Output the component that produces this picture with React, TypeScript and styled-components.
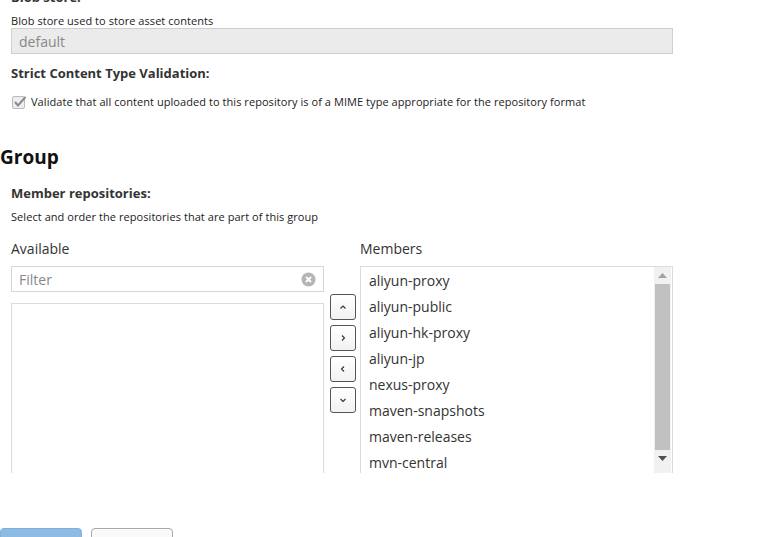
import React from "react";
import styled, { createGlobalStyle } from "styled-components";

const Global = createGlobalStyle`
  html, body { margin: 0; padding: 0; background: #fff; overflow: hidden; }
  body { font-family: "Open Sans", "Liberation Sans", sans-serif; color: #333; }
`;

const Page = styled.div`
  width: 766px;
  height: 537px;
  overflow: hidden;
  position: relative;
`;

const Inner = styled.div`
  margin-top: -11px;
  display: flex;
  flex-direction: column;
`;

const Section = styled.div`
  padding-left: 11px;
  display: flex;
  flex-direction: column;
`;

const FieldLabel = styled.div`
  font-size: 13px;
  font-weight: 700;
  color: #333;
  line-height: 16px;
`;

const HelpText = styled.div`
  font-size: 11px;
  color: #222;
  line-height: 14px;
  letter-spacing: 0.06px;
  margin-top: ${(p: { $mt?: number }) => p.$mt ?? 0}px;
`;

const TextInput = styled.div<{ $disabled?: boolean; $w: number }>`
  box-sizing: border-box;
  width: ${(p) => p.$w}px;
  height: 26px;
  border: 1px solid ${(p) => (p.$disabled ? "#cfcfcf" : "#d6d6d6")};
  background: ${(p) => (p.$disabled ? "#ebebeb" : "#fff")};
  color: #888;
  font-size: 14px;
  padding: 0 7px;
  display: flex;
  align-items: center;
  justify-content: space-between;
`;

const CheckRow = styled.div`
  display: flex;
  align-items: center;
  gap: 6px;
  margin-top: 14px;
  padding-left: 1px;
`;

const CheckBox = styled.div`
  width: 13px;
  height: 13px;
  box-sizing: border-box;
  border: 1px solid #bbb;
  background: #eee;
  border-radius: 2px;
  position: relative;
`;

const Heading = styled.div`
  font-size: 19px;
  font-weight: 700;
  color: #111;
  margin-top: 36px;
  line-height: 24px;
`;

const Columns = styled.div`
  display: flex;
  align-items: flex-start;
  margin-top: 16px;
`;

const Column = styled.div`
  display: flex;
  flex-direction: column;
`;

const ColTitle = styled.div`
  font-size: 14px;
  color: #333;
  line-height: 18px;
  height: 26px;
`;

const ListBox = styled.div<{ $w: number; $h: number; $mt?: number }>`
  box-sizing: border-box;
  width: ${(p) => p.$w}px;
  height: ${(p) => p.$h}px;
  margin-top: ${(p) => p.$mt ?? 0}px;
  border: 1px solid #dcdcdc;
  border-bottom: none;
  background: #fff;
  display: flex;
`;

const Items = styled.div`
  flex: 1;
  display: flex;
  flex-direction: column;
  padding-top: 1px;
`;

const Item = styled.div`
  height: 26px;
  line-height: 26px;
  padding-left: 8px;
  font-size: 14px;
  color: #333;
`;

const ScrollBar = styled.div`
  width: 17px;
  background: #f1f1f1;
  display: flex;
  flex-direction: column;
  align-items: center;
  margin-right: 1px;
`;

const ScrollArrow = styled.div`
  height: 17px;
  width: 17px;
  display: flex;
  align-items: center;
  justify-content: center;
`;

const ScrollThumb = styled.div`
  width: 15px;
  height: 166px;
  background: #c1c1c1;
`;

const Buttons = styled.div`
  display: flex;
  flex-direction: column;
  gap: 5px;
  margin: 54px 4px 0 6px;
`;

const OrderButton = styled.div`
  box-sizing: border-box;
  width: 26px;
  height: 26px;
  border: 1px solid #555;
  border-radius: 3px;
  background: linear-gradient(#fff, #f2f2f2);
  display: flex;
  align-items: center;
  justify-content: center;
`;

const Footer = styled.div`
  display: flex;
  gap: 9px;
  margin-top: 55px;
`;

const FootButton = styled.div<{ $primary?: boolean }>`
  box-sizing: border-box;
  width: 82px;
  height: 30px;
  border-radius: 4px;
  border: 1px solid ${(p) => (p.$primary ? "#7fb0dc" : "#a8a8a8")};
  background: ${(p) => (p.$primary ? "#8ebbe3" : "#fafafa")};
`;

const Chevron = ({ d }: { d: string }) => (
  <svg width="10" height="10" viewBox="0 0 10 10">
    <path d={d} fill="none" stroke="#333" strokeWidth="1.1" />
  </svg>
);

const members = [
  "aliyun-proxy",
  "aliyun-public",
  "aliyun-hk-proxy",
  "aliyun-jp",
  "nexus-proxy",
  "maven-snapshots",
  "maven-releases",
  "mvn-central",
];

export default function App() {
  return (
    <Page>
      <Global />
      <Inner>
        <Section>
          <FieldLabel>Blob store:</FieldLabel>
          <HelpText $mt={9}>Blob store used to store asset contents</HelpText>
          <TextInput $disabled $w={662}>
            default
          </TextInput>
          <FieldLabel style={{ marginTop: 11 }}>Strict Content Type Validation:</FieldLabel>
          <CheckRow>
            <CheckBox>
              <svg width="14" height="12" viewBox="0 0 14 12" style={{ position: "absolute", left: 0, top: -1 }}>
                <path d="M2 6 L5 9.5 L12.5 1" fill="none" stroke="#8a8a8a" strokeWidth="2" />
              </svg>
            </CheckBox>
            <HelpText>
              Validate that all content uploaded to this repository is of a MIME type appropriate for the repository format
            </HelpText>
          </CheckRow>
        </Section>
        <Heading>Group</Heading>
        <Section>
          <FieldLabel style={{ marginTop: 16 }}>Member repositories:</FieldLabel>
          <HelpText $mt={9}>Select and order the repositories that are part of this group</HelpText>
          <Columns>
            <Column>
              <ColTitle>Available</ColTitle>
              <TextInput $w={313}>
                Filter
                <svg width="15" height="15" viewBox="0 0 16 16">
                  <circle cx="8" cy="8" r="7.5" fill="#b5b5b5" />
                  <path d="M5.3 5.3 L10.7 10.7 M10.7 5.3 L5.3 10.7" stroke="#fff" strokeWidth="2" />
                </svg>
              </TextInput>
              <ListBox $w={313} $h={170} $mt={11} />
            </Column>
            <Buttons>
              <OrderButton>
                <Chevron d="M2.5 6.5 L5 4 L7.5 6.5" />
              </OrderButton>
              <OrderButton>
                <Chevron d="M4 2.5 L6.5 5 L4 7.5" />
              </OrderButton>
              <OrderButton>
                <Chevron d="M6 2.5 L3.5 5 L6 7.5" />
              </OrderButton>
              <OrderButton>
                <Chevron d="M2.5 4 L5 6.5 L7.5 4" />
              </OrderButton>
            </Buttons>
            <Column>
              <ColTitle>Members</ColTitle>
              <ListBox $w={313} $h={207}>
                <Items>
                  {members.map((m) => (
                    <Item key={m}>{m}</Item>
                  ))}
                </Items>
                <ScrollBar>
                  <ScrollArrow>
                    <svg width="9" height="5" viewBox="0 0 9 5">
                      <path d="M0 5 L4.5 0 L9 5 Z" fill="#a3a3a3" />
                    </svg>
                  </ScrollArrow>
                  <ScrollThumb />
                  <ScrollArrow>
                    <svg width="9" height="5" viewBox="0 0 9 5">
                      <path d="M0 0 L4.5 5 L9 0 Z" fill="#505050" />
                    </svg>
                  </ScrollArrow>
                </ScrollBar>
              </ListBox>
            </Column>
          </Columns>
        </Section>
        <Footer>
          <FootButton $primary />
          <FootButton />
        </Footer>
      </Inner>
    </Page>
  );
}
